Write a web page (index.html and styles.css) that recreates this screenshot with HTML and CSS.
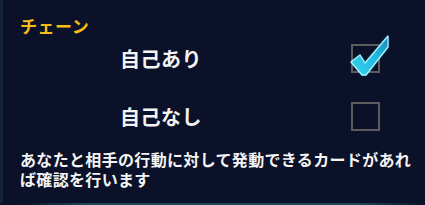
FILE: index.html
```html
<!DOCTYPE html>
<html lang="ja">
<head>
<meta charset="UTF-8">
<title>チェーン設定</title>
<link rel="stylesheet" href="styles.css">
</head>
<body>

<!-- 設定パネル -->
<div class="panel">
    <div class="title">チェーン</div>

    <div class="option">
        <span class="label">自己あり</span>
        <span class="box checked">
            <svg class="check" width="48" height="48" viewBox="-6 -14 48 48">
                <defs>
                    <linearGradient id="chk" x1="0" y1="1" x2="1" y2="0">
                        <stop offset="0" stop-color="#34d4f2"/>
                        <stop offset="0.6" stop-color="#22b6e0"/>
                        <stop offset="1" stop-color="#1a86b0"/>
                    </linearGradient>
                    <filter id="glow" x="-30%" y="-30%" width="160%" height="160%">
                        <feGaussianBlur stdDeviation="1.2"/>
                    </filter>
                </defs>
                <polygon points="0,18 9,11 14,19 37,-8 37,3 15,31 11,31" fill="#3fe0ff" opacity="0.7" filter="url(#glow)"/>
                <polygon points="0,18 9,11 14,19 37,-8 37,3 15,31 11,31" fill="url(#chk)" stroke="#a6f4ff" stroke-width="1.3" stroke-linejoin="round"/>
            </svg>
        </span>
    </div>

    <div class="option">
        <span class="label">自己なし</span>
        <span class="box"></span>
    </div>

    <p class="desc">あなたと相手の行動に対して発動できるカードがあれば確認を行います</p>
</div>
<div class="bottom-line"></div>

</body>
</html>
```

FILE: styles.css
```css
body {
margin: 0;
background: #0b1128;
font-family: "Noto Sans CJK JP", "Noto Sans", sans-serif;
font-weight: bold;
color: #f4f4f4;
}

.panel {
height: 203px;
box-sizing: border-box;
border-left: 3px solid #15223c;
padding: 16px 5px 0 17px;
}

.title {
color: #f6bd16;
font-size: 17px;
line-height: 20px;
letter-spacing: 0.5px;
}

.option {
display: grid;
grid-template-columns: 231px 29px;
align-items: center;
padding-left: 100px;
margin-top: 8px;
}

.option + .option {
margin-top: 29px;
}

.label {
font-size: 20px;
line-height: 29px;
letter-spacing: 0.5px;
}

.box {
position: relative;
width: 29px;
height: 29px;
box-sizing: border-box;
border: 2px solid #5c5c5e;
}

.box .check {
position: absolute;
left: -8px;
top: -16px;
}

.desc {
margin: 18px 0 0;
font-size: 16px;
line-height: 20px;
letter-spacing: 0.33px;
}

.bottom-line {
height: 2px;
background: linear-gradient(to right, #0b1128 5%, #1a4658 20%, #1a4658 85%, #0b1128);
}
```
